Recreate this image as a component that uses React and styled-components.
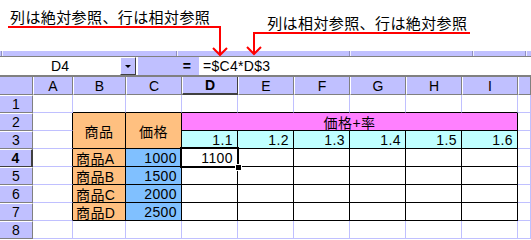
import React from "react";
import styled, { createGlobalStyle, css } from "styled-components";

const GlobalStyle = createGlobalStyle`
  html, body {
    margin: 0;
    padding: 0;
    background: #fff;
  }
  body {
    font-family: "Liberation Sans", "Noto Sans CJK JP", sans-serif;
    color: #000;
  }
`;

const LAVENDER = "#c0c0ff";
const GRID = "#c0c0ff";

const Page = styled.div`
  position: relative;
  width: 531px;
  height: 240px;
  overflow: hidden;
`;

// callout texts above the sheet
const Callouts = styled.div`
  display: flex;
  gap: 57px;
  height: 51px;
  padding-left: 10px;
  box-sizing: border-box;
  font-family: "Noto Sans CJK JP", sans-serif;
  font-size: 15px;
  letter-spacing: 0.4px;
`;

const Note = styled.div`
  margin-top: ${(p) => p.$top}px;
  line-height: 15px;
  white-space: nowrap;
`;

const Arrows = styled.svg`
  position: absolute;
  left: 0;
  top: 0;
  z-index: 5;
  pointer-events: none;
`;

// bottom of the toolbar
const Stripe = styled.div`
  display: flex;
  height: 5px;
  background: ${LAVENDER};
  border-bottom: 1px solid #808080;
`;

const StripeSeg = styled.div`
  width: ${(p) => p.$w}px;
  flex: none;
  border-right: 1px solid #f0f0ff;
  box-shadow: inset -1px 0 0 #9090c0;
  &:last-child {
    flex: 1;
    border-right: none;
    box-shadow: none;
  }
`;

// formula bar
const FormulaBar = styled.div`
  display: grid;
  grid-template-columns: 120px 16px 2px 61px 1fr;
  height: 20px;
  box-sizing: border-box;
  border-bottom: 2px solid #808080;
  font-size: 14px;
`;

const NameBox = styled.div`
  display: flex;
  align-items: center;
  justify-content: center;
  background: #fff;
`;

const DropButton = styled.div`
  display: flex;
  align-items: center;
  justify-content: center;
  box-sizing: border-box;
  background: ${LAVENDER};
  border: 1px solid;
  border-color: #fff #404040 #404040 #fff;
  &::after {
    content: "";
    border-left: 3px solid transparent;
    border-right: 3px solid transparent;
    border-top: 3px solid #000;
  }
`;

const Gap = styled.div`
  background: #fff;
`;

const EqualsBox = styled.div`
  display: flex;
  align-items: center;
  justify-content: flex-end;
  padding-right: 8px;
  background: ${LAVENDER};
  font-weight: 700;
`;

const FormulaInput = styled.div`
  display: flex;
  align-items: center;
  padding-left: 4px;
  background: #fff;
  letter-spacing: 0.3px;
`;

// worksheet
const Sheet = styled.div`
  display: grid;
  grid-template-columns: 33px 40px 53px repeat(7, 56px) 13px;
  grid-auto-rows: 18px;
  font-size: 14px;
`;

const headBase = css`
  box-sizing: border-box;
  display: flex;
  align-items: center;
  justify-content: center;
  background: ${LAVENDER};
  white-space: nowrap;
  overflow: hidden;
`;

const Corner = styled.div`
  ${headBase};
  border-right: 1px solid #808080;
  border-bottom: 1px solid #808080;
`;

const ColHead = styled.div`
  ${headBase};
  border-left: 1px solid #fff;
  border-right: 1px solid #808080;
  border-bottom: 1px solid #808080;
  ${(p) =>
    p.$active &&
    css`
      font-weight: 700;
      border-right-color: #404040;
      border-bottom: 2px solid #404040;
    `}
`;

const RowHead = styled.div`
  ${headBase};
  border-top: 1px solid #fff;
  border-right: 1px solid #808080;
  border-bottom: 1px solid #808080;
  ${(p) =>
    p.$active &&
    css`
      font-weight: 700;
      border-bottom-color: #404040;
      border-right: 2px solid #404040;
    `}
`;

const Cell = styled.div`
  box-sizing: border-box;
  display: flex;
  align-items: center;
  justify-content: ${(p) =>
    p.$align === "right" ? "flex-end" : p.$align === "center" ? "center" : "flex-start"};
  padding: 0 ${(p) => (p.$align === "right" ? 4 : 3)}px 0 3px;
  background: ${(p) => p.$bg || "#fff"};
  border-right: 1px solid ${(p) => (p.$r ? "#000" : GRID)};
  border-bottom: 1px solid ${(p) => (p.$b ? "#000" : GRID)};
  letter-spacing: 0.4px;
  white-space: nowrap;
  overflow: hidden;
  ${(p) => p.$rows && css`grid-row: span ${p.$rows};`}
  ${(p) => p.$cols && css`grid-column: span ${p.$cols};`}
  ${(p) =>
    p.$selected &&
    css`
      position: relative;
      overflow: visible;
      &::before {
        content: "";
        position: absolute;
        left: -2px;
        top: -2px;
        right: -2px;
        bottom: -2px;
        border: 2px solid #000;
        box-shadow: inset 0 0 0 1px #fff;
      }
      &::after {
        content: "";
        position: absolute;
        right: -5px;
        bottom: -5px;
        width: 5px;
        height: 5px;
        background: #000;
        border: 1px solid #fff;
      }
    `}
`;

const ORANGE = "#ffc080";
const BLUE = "#80c0ff";
const PINK = "#ff80ff";
const CYAN = "#c0ffff";

const letters = ["A", "B", "C", "D", "E", "F", "G", "H", "I", ""];
const rates = ["1.1", "1.2", "1.3", "1.4", "1.5", "1.6"];
const products = [
  ["商品A", "1000", "1100"],
  ["商品B", "1500", ""],
  ["商品C", "2000", ""],
  ["商品D", "2500", ""],
];

const App = () => {
  return (
    <Page>
      <GlobalStyle />
      <Callouts>
        <Note $top={9}>列は絶対参照、行は相対参照</Note>
        <Note $top={15}>列は相対参照、行は絶対参照</Note>
      </Callouts>

      <Arrows width="531" height="60" viewBox="0 0 531 60">
        <g stroke="#ff0000" strokeWidth="2" fill="none">
          <polyline points="8,27 220,27 220,55" />
          <polyline points="213,48 220,55 227,48" />
          <polyline points="470,33 254,33 254,54" />
          <polyline points="247,47 254,54 261,47" />
        </g>
      </Arrows>

      <Stripe>
        <StripeSeg $w={2} />
        <StripeSeg $w={174} />
        <StripeSeg $w={172} />
        <StripeSeg $w={122} />
        <StripeSeg $w={52} />
        <StripeSeg />
      </Stripe>

      <FormulaBar>
        <NameBox>D4</NameBox>
        <DropButton />
        <Gap />
        <EqualsBox>=</EqualsBox>
        <FormulaInput>=$C4*D$3</FormulaInput>
      </FormulaBar>

      <Sheet>
        <Corner />
        {letters.map((l, i) => (
          <ColHead key={i} $active={l === "D"}>
            {l}
          </ColHead>
        ))}

        <RowHead>1</RowHead>
        {letters.map((l, i) => (
          <Cell key={i} $b={i >= 1 && i <= 8} />
        ))}

        <RowHead>2</RowHead>
        <Cell $r />
        <Cell $rows={2} $bg={ORANGE} $r $b $align="center">
          商品
        </Cell>
        <Cell $rows={2} $bg={ORANGE} $r $b $align="center">
          価格
        </Cell>
        <Cell $cols={6} $bg={PINK} $r $b $align="center">
          価格+率
        </Cell>
        <Cell />

        <RowHead>3</RowHead>
        <Cell $r />
        {rates.map((r) => (
          <Cell key={r} $bg={CYAN} $r $b $align="right">
            {r}
          </Cell>
        ))}
        <Cell />

        {products.map(([name, price, val], idx) => (
          <React.Fragment key={name}>
            <RowHead $active={idx === 0}>{idx + 4}</RowHead>
            <Cell $r />
            <Cell $bg={ORANGE} $r $b>
              {name}
            </Cell>
            <Cell $bg={BLUE} $r $b $align="right">
              {price}
            </Cell>
            {rates.map((r, j) => (
              <Cell key={r} $r $b $align="right" $selected={idx === 0 && j === 0}>
                {j === 0 ? val : ""}
              </Cell>
            ))}
            <Cell />
          </React.Fragment>
        ))}

        <RowHead>8</RowHead>
        {letters.map((l, i) => (
          <Cell key={i} />
        ))}
      </Sheet>
    </Page>
  );
};

export default App;
